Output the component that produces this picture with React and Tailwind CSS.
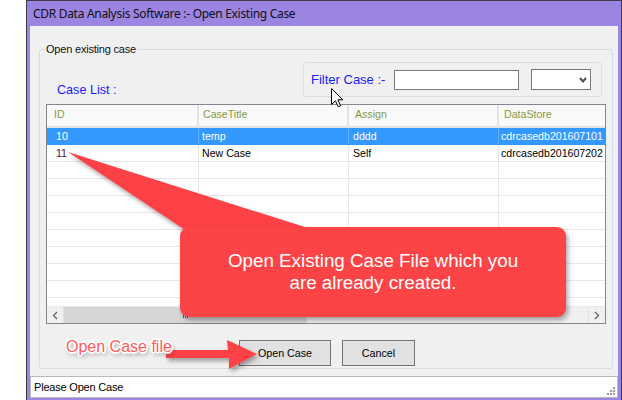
import React from "react";

function Row({ sel, id, title, assign, store }) {
  const line = sel ? "border-[#62b0ff]" : "border-[#e6e6e6]";
  return (
    <div className={`flex h-[17px] shrink-0 border-b ${sel ? "border-b-[#3399ff] bg-[#3399ff] text-white" : "border-b-[#e6e6e6] bg-white text-black"}`}>
      <div className={`w-[152px] shrink-0 border-r ${line} pl-[9px] flex items-center ${sel ? "" : "text-[#4d0f4d]"}`}>{id}</div>
      <div className={`w-[150px] shrink-0 border-r ${line} pl-[3px] flex items-center`}>{title}</div>
      <div className={`w-[150px] shrink-0 border-r ${line} pl-[4px] flex items-center`}>{assign}</div>
      <div className={`w-[150px] shrink-0 pl-[2px] flex items-center whitespace-nowrap`}>{store}</div>
    </div>
  );
}

export default function App() {
  const empties = Array.from({ length: 9 });
  return (
    <div className="relative w-[622px] h-[400px] bg-white overflow-hidden flex font-['Liberation_Sans',Arial,sans-serif]">
      {/* window */}
      <div className="ml-[26px] w-[596px] h-[402px] shrink-0 border border-[#3b3b4a] bg-[#9b84e2] flex flex-col px-[3px] pb-[3px]">
        <div className="h-[25px] shrink-0 flex items-center pl-[3px] text-[12px] tracking-[-0.3px] text-[#111] font-['Noto_Sans',sans-serif] leading-none">
          CDR Data Analysis Software :- Open Existing Case
        </div>
        <div className="flex-1 bg-[#f0f0f0] flex flex-col">
          {/* group box */}
          <div className="relative mt-[23px] ml-[9px] mr-[5px] h-[320px] border border-[#d6dde5] rounded-[3px] flex flex-col">
            <div className="absolute -top-[8px] left-[5px] bg-[#f0f0f0] px-[1px] text-[11px] tracking-[-0.2px] leading-[14px] text-[#111]">
              Open existing case
            </div>
            <div className="flex items-start justify-between mt-[12px]">
              <div className="ml-[17px] mt-[21px] text-[12.6px] leading-[15px] text-[#1a1aff]">Case List :</div>
              <div className="mr-[10px] w-[299px] h-[35px] border border-[#d9dee4] rounded-[3px] flex items-center pl-[7px]">
                <div className="w-[83px] shrink-0 text-[13px] leading-[15px] text-[#1a1aff]">Filter Case :-</div>
                <div className="w-[125px] h-[20px] shrink-0 bg-white border border-[#7a7a7a]" />
                <div className="ml-[12px] w-[60px] h-[21px] shrink-0 bg-white border border-[#7a7a7a] flex items-center justify-end pr-[3px]">
                  <svg width="8" height="6" viewBox="0 0 8 6">
                    <path d="M1 1 L4 4.5 L7 1" fill="none" stroke="#505050" strokeWidth="2" />
                  </svg>
                </div>
              </div>
            </div>
            {/* grid */}
            <div className="mt-[6px] mx-[6px] h-[220px] border border-[#828790] bg-white flex flex-col overflow-hidden text-[10.6px] leading-[13px]">
              <div className="h-[23px] shrink-0 flex bg-[#f9f9f9] border-b-2 border-[#e3e3e3] text-[#849b3e]">
                <div className="w-[152px] shrink-0 border-r-2 border-[#e3e3e3] pl-[7px] pb-[2px] flex items-center">ID</div>
                <div className="w-[150px] shrink-0 border-r-2 border-[#e3e3e3] pl-[4px] pb-[2px] flex items-center">CaseTitle</div>
                <div className="w-[150px] shrink-0 border-r-2 border-[#e3e3e3] pl-[6px] pb-[2px] flex items-center">Assign</div>
                <div className="w-[150px] shrink-0 pl-[5px] pb-[2px] flex items-center">DataStore</div>
              </div>
              <div className="flex-1 flex flex-col overflow-hidden">
                <Row sel id="10" title="temp" assign="dddd" store="cdrcasedb201607101" />
                <Row id="11" title="New Case" assign="Self" store="cdrcasedb201607202" />
                {empties.map((_, i) => (
                  <Row key={i} id="" title="" assign="" store="" />
                ))}
              </div>
              <div className="h-[17px] shrink-0 flex bg-[#f0f0f0] border-t border-[#e8e8e8]">
                <div className="w-[17px] shrink-0 flex items-center justify-center border-r border-[#e0e0e0]">
                  <svg width="6" height="9" viewBox="0 0 6 9">
                    <path d="M5 1 L1.5 4.5 L5 8" fill="none" stroke="#606060" strokeWidth="1.2" />
                  </svg>
                </div>
                <div className="w-[243px] shrink-0 bg-[#d6d6d6] flex items-center justify-center gap-[1px]">
                  <div className="w-[1px] h-[6px] bg-[#606060]" />
                  <div className="w-[1px] h-[6px] bg-[#606060]" />
                  <div className="w-[1px] h-[6px] bg-[#606060]" />
                </div>
                <div className="flex-1" />
                <div className="w-[17px] shrink-0 flex items-center justify-center border-l border-[#e0e0e0]">
                  <svg width="6" height="9" viewBox="0 0 6 9">
                    <path d="M1 1 L4.5 4.5 L1 8" fill="none" stroke="#606060" strokeWidth="1.2" />
                  </svg>
                </div>
              </div>
            </div>
            {/* buttons */}
            <div className="flex mt-[16px] text-[10.7px] text-black">
              <div className="ml-[199px] w-[92px] h-[26px] bg-[#e1e1e1] border border-[#757575] flex items-center justify-center">Open Case</div>
              <div className="ml-[11px] w-[73px] h-[26px] bg-[#e1e1e1] border border-[#757575] flex items-center justify-center">Cancel</div>
            </div>
          </div>
          {/* status bar */}
          <div className="mt-[7px] h-[22px] shrink-0 bg-white border border-[#b9b9b9] flex items-center justify-between pl-[3px] pr-[1px] text-[11px] tracking-[-0.2px] text-black">
            <span>Please Open Case</span>
            <svg width="10" height="10" viewBox="0 0 10 10" className="self-end mb-[1px]">
              <rect x="7" y="1" width="2" height="2" fill="#9a9a9a" />
              <rect x="4" y="4" width="2" height="2" fill="#9a9a9a" />
              <rect x="7" y="4" width="2" height="2" fill="#9a9a9a" />
              <rect x="1" y="7" width="2" height="2" fill="#9a9a9a" />
              <rect x="4" y="7" width="2" height="2" fill="#9a9a9a" />
              <rect x="7" y="7" width="2" height="2" fill="#9a9a9a" />
            </svg>
          </div>
        </div>
      </div>

      {/* annotations overlay */}
      <svg className="absolute left-0 top-0 pointer-events-none" width="622" height="400" viewBox="0 0 622 400">
        <defs>
          <filter id="sh" x="-20%" y="-20%" width="140%" height="160%">
            <feDropShadow dx="2" dy="3" stdDeviation="2" floodColor="#000" floodOpacity="0.35" />
          </filter>
        </defs>
        <polygon points="68,152 330,235 200,240" fill="#fc4346" filter="url(#sh)" />
        <polygon points="166,350 228,350 227,340 257,354 229,369 229,358 166,358" fill="#fc4346" filter="url(#sh)" />
      </svg>
      <div className="absolute left-[180px] top-[227px] w-[386px] h-[90px] rounded-[9px] bg-[#fc4346] shadow-[2px_3px_5px_rgba(0,0,0,0.35)] flex flex-col items-center justify-center text-white text-[18.8px] leading-[22px] text-center">
        <div>Open Existing Case File which you</div>
        <div>are already created.</div>
      </div>
      <div className="absolute left-[66px] top-[337px] text-[16px] leading-[19px] text-[#ff5b5b] whitespace-nowrap [text-shadow:1px_0_0_#fff,-1px_0_0_#fff,0_1px_0_#fff,0_-1px_0_#fff,1px_1px_0_#fff,-1px_-1px_0_#fff,1px_-1px_0_#fff,-1px_1px_0_#fff,2px_0_1px_#fff,-2px_0_1px_#fff,0_2px_1px_#fff,0_-2px_1px_#fff,2px_3px_4px_rgba(0,0,0,0.5)]">
        Open Case file
      </div>
      {/* mouse cursor */}
      <svg className="absolute left-[331px] top-[88px] pointer-events-none" width="13" height="20" viewBox="0 0 13 20">
        <path d="M0.5 0.5 L0.5 16.5 L4.5 12.8 L7.3 18.8 L9.6 17.8 L6.9 11.8 L11.8 11.8 Z" fill="#fff" stroke="#000" strokeWidth="1" strokeLinejoin="miter" />
      </svg>
    </div>
  );
}
